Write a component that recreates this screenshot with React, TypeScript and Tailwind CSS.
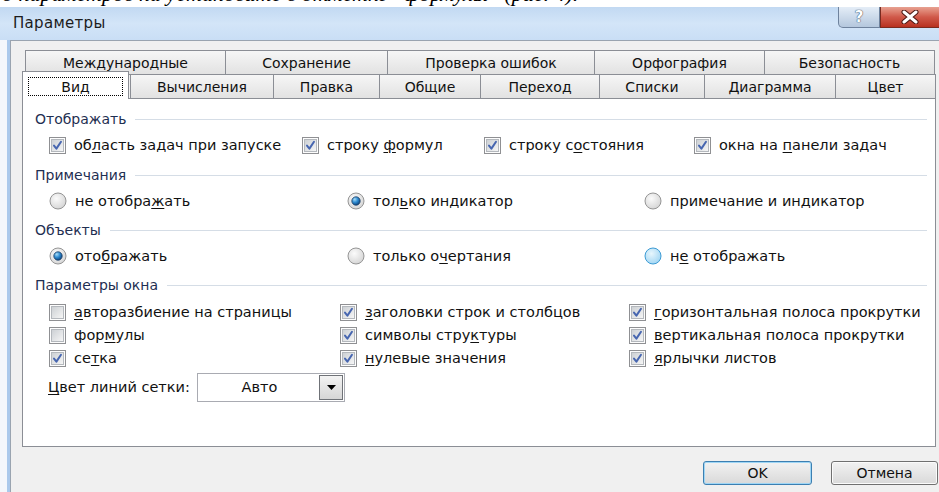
import React, { useId } from "react";

// label text uses "&" before the access-key letter, like Win32 resources
function Label({ text }: { text: string }) {
  const i = text.indexOf("&");
  if (i < 0) return <span>{text}</span>;
  return (
    <span>
      {text.slice(0, i)}
      <u className="underline-offset-2">{text[i + 1]}</u>
      {text.slice(i + 2)}
    </span>
  );
}

function CheckBox({ checked }: { checked: boolean }) {
  const id = useId();
  return (
    <svg width="17" height="17" viewBox="0 0 17 17" className="shrink-0">
      <defs>
        <linearGradient id={id} x1="0" y1="0" x2="1" y2="1">
          <stop offset="0" stopColor="#cbcfd3" />
          <stop offset="1" stopColor="#f7f7f7" />
        </linearGradient>
      </defs>
      <rect x="0.5" y="0.5" width="16" height="16" fill="#fdfdfd" stroke="#8f9093" />
      <rect x="2.5" y="2.5" width="12" height="12" fill={`url(#${id})`} stroke="#b4b8bd" />
      {checked && (
        <path d="M5 8.6 L7.4 11.6 L12 4.8" fill="none" stroke="#4766b0" strokeWidth="2" strokeLinecap="round" strokeLinejoin="round" />
      )}
    </svg>
  );
}

function Radio({ checked, hot }: { checked?: boolean; hot?: boolean }) {
  const id = useId();
  return (
    <svg width="18" height="18" viewBox="0 0 18 18" className="shrink-0">
      <defs>
        <radialGradient id={id + "a"} cx="0.4" cy="0.35" r="0.7">
          <stop offset="0" stopColor={hot ? "#e8f6fd" : "#fbfbfb"} />
          <stop offset="1" stopColor={hot ? "#9fd5f3" : "#d4d4d4"} />
        </radialGradient>
        <radialGradient id={id + "b"} cx="0.35" cy="0.3" r="0.75">
          <stop offset="0" stopColor="#a6dcf8" />
          <stop offset="0.5" stopColor="#2d8ad0" />
          <stop offset="1" stopColor="#0c3f77" />
        </radialGradient>
      </defs>
      <circle cx="9" cy="9" r="8" fill={`url(#${id}a)`} stroke={hot ? "#3d9bd4" : "#959595"} />
      {checked && <circle cx="9" cy="9" r="4.2" fill={`url(#${id}b)`} stroke="#1d3f66" strokeWidth="0.8" />}
    </svg>
  );
}

function Item({ text, box, width }: { text: string; box: React.ReactNode; width?: string }) {
  return (
    <div className={`flex items-center gap-[8px] text-[14.5px] ${width ?? ""}`}>
      {box}
      <Label text={text} />
    </div>
  );
}

function Section({ title, className }: { title: string; className: string }) {
  return (
    <div className={`flex items-center h-[20px] pl-[12px] pr-[8px] ${className}`}>
      <span className="text-[#1f2f52]">{title}</span>
      <div className="flex-1 h-px bg-[#d5dde6] ml-[9px]" />
    </div>
  );
}

const backTabs = [
  { name: "Международные", w: "w-[201px]" },
  { name: "Сохранение", w: "w-[163px]" },
  { name: "Проверка ошибок", w: "w-[208px]" },
  { name: "Орфография", w: "w-[171px]" },
  { name: "Безопасность", w: "w-[171px]" },
];

const frontTabs = [
  { name: "Вычисления", w: "w-[144px]" },
  { name: "Правка", w: "w-[107px]" },
  { name: "Общие", w: "w-[102px]" },
  { name: "Переход", w: "w-[120px]" },
  { name: "Списки", w: "w-[106px]" },
  { name: "Диаграмма", w: "w-[132px]" },
  { name: "Цвет", w: "w-[101px]" },
];

const tabCls =
  "flex items-center justify-center border border-[#8b8e95] bg-gradient-to-b from-[#f6f6f6] to-[#e2e2e2] text-[#111]";

export default function App() {
  return (
    <div className="w-[939px] h-[492px] overflow-hidden bg-white font-['DejaVu_Sans',sans-serif] text-[14px] leading-none text-[#111] flex flex-col">
      {/* tail of the paragraph above the screenshot */}
      <div className="h-[7px] overflow-hidden shrink-0">
        <div className="-mt-[17px] pl-[2px] whitespace-nowrap font-['Liberation_Serif',serif] italic text-[22px] leading-[22px] text-black">
          о параметров на установите в отметке «формулы» (рис. 4).
        </div>
      </div>

      {/* title bar */}
      <div className="h-[33px] shrink-0 flex bg-gradient-to-b from-[#c2d9f2] via-[#d3e5f8] to-[#c9def5]">
        <div className="pl-[13px] pt-[9px] text-[15px] tracking-[0.3px] text-[#1c1c1c]">Параметры</div>
        <div className="ml-auto flex h-[21px]">
          <div className="w-[42px] flex items-center justify-center rounded-bl-[5px] border border-t-0 border-[#6e829d] bg-gradient-to-b from-[#e4edf7] to-[#b4c7dd] text-[15px] font-bold text-white [text-shadow:0_0_1px_#2b3e58,0_0_1px_#2b3e58]">
            ?
          </div>
          <div className="w-[59px] flex items-center justify-center border border-t-0 border-r-0 border-[#7a2a1f] bg-gradient-to-b from-[#e7a191] via-[#d0594a] to-[#b8301f]">
            <svg width="18" height="14" viewBox="0 0 18 14">
              <path d="M3 2 L15 12 M15 2 L3 12" stroke="#4a1510" strokeWidth="5" strokeLinecap="round" />
              <path d="M3 2 L15 12 M15 2 L3 12" stroke="#fff" strokeWidth="3" strokeLinecap="round" />
            </svg>
          </div>
        </div>
      </div>

      <div className="flex flex-1">
        {/* left window frame */}
        <div className="w-[7px] bg-[#f3f7fc]" />
        <div className="w-[3px] bg-[#aac9ec]" />

        <div className="flex-1 bg-[#f0f0f0] border-l border-t border-[#9aa4b0]">
          {/* tab strip, back row */}
          <div className="ml-[14px] mt-[9px] flex h-[25px]">
            {backTabs.map((t, i) => (
              <div key={t.name} className={`${tabCls} ${t.w} ${i > 0 ? "-ml-px" : ""}`}>
                {t.name}
              </div>
            ))}
          </div>

          {/* tab strip, front row */}
          <div className="ml-[11px] -mt-[4px] flex items-end h-[28px]">
            <div className="relative z-10 w-[107px] h-[28px] bg-white border border-b-0 border-[#8b8e95] flex justify-center pt-[5px]">
              <div className="w-[95px] h-[19px] border border-dotted border-black flex items-center justify-center">
                Вид
              </div>
            </div>
            {frontTabs.map((t, i) => (
              <div key={t.name} className={`${tabCls} ${t.w} h-[25px] ${i > 0 ? "-ml-px" : "ml-px"}`}>
                {t.name}
              </div>
            ))}
          </div>

          {/* page "Вид" */}
          <div className="ml-[11px] -mt-px w-[914px] h-[349px] bg-white border border-[#8b8e95] pt-[10px]">
            <Section title="Отображать" className="" />
            <div className="flex items-center h-[22px] pl-[26px] mt-[5px]">
              <Item width="w-[253px]" text="об&ласть задач при запуске" box={<CheckBox checked />} />
              <Item width="w-[182px]" text="строку &формул" box={<CheckBox checked />} />
              <Item width="w-[210px]" text="строку с&остояния" box={<CheckBox checked />} />
              <Item text="окна на &панели задач" box={<CheckBox checked />} />
            </div>

            <Section title="Примечания" className="mt-[9px]" />
            <div className="flex items-center h-[22px] pl-[26px] mt-[5px]">
              <Item width="w-[298px]" text="не отобра&жать" box={<Radio />} />
              <Item width="w-[297px]" text="тол&ько индикатор" box={<Radio checked />} />
              <Item text="примечание и индикатор" box={<Radio />} />
            </div>

            <Section title="Объекты" className="mt-[8px]" />
            <div className="flex items-center h-[22px] pl-[26px] mt-[5px]">
              <Item width="w-[298px]" text="ото&бражать" box={<Radio checked />} />
              <Item width="w-[297px]" text="только о&чертания" box={<Radio />} />
              <Item text="н&е отображать" box={<Radio hot />} />
            </div>

            <Section title="Параметры окна" className="mt-[8px]" />
            <div className="mt-[6px] pl-[26px]">
              <div className="flex items-center h-[23px]">
                <Item width="w-[291px]" text="&авторазбиение на страницы" box={<CheckBox checked={false} />} />
                <Item width="w-[289px]" text="&заголовки строк и столбцов" box={<CheckBox checked />} />
                <Item text="&горизонтальная полоса прокрутки" box={<CheckBox checked />} />
              </div>
              <div className="flex items-center h-[23px]">
                <Item width="w-[291px]" text="фор&мулы" box={<CheckBox checked={false} />} />
                <Item width="w-[289px]" text="символы стру&ктуры" box={<CheckBox checked />} />
                <Item text="&вертикальная полоса прокрутки" box={<CheckBox checked />} />
              </div>
              <div className="flex items-center h-[23px]">
                <Item width="w-[291px]" text="се&тка" box={<CheckBox checked />} />
                <Item width="w-[289px]" text="&нулевые значения" box={<CheckBox checked />} />
                <Item text="&ярлычки листов" box={<CheckBox checked />} />
              </div>
            </div>

            <div className="mt-[3px] pl-[25px] flex items-center h-[29px] text-[14.5px]">
              <div className="w-[149px]">
                <Label text="&Цвет линий сетки:" />
              </div>
              <div className="w-[148px] h-[29px] border border-[#a9abb2] bg-white flex items-center">
                <div className="flex-1 text-center pl-[2px]">Авто</div>
                <div className="w-[24px] h-[25px] mr-[1px] border border-[#6f7277] bg-gradient-to-b from-[#f3f3f3] to-[#d6d6d6] flex items-center justify-center">
                  <svg width="9" height="5" viewBox="0 0 9 5">
                    <path d="M0 0 H9 L4.5 5 Z" fill="#000" />
                  </svg>
                </div>
              </div>
            </div>
          </div>

          {/* dialog buttons */}
          <div className="mt-[14px] flex justify-end gap-[19px] pr-[1px]">
            <button className="w-[109px] h-[24px] rounded-[3px] border border-[#3c7fb1] bg-gradient-to-b from-[#f2f2f2] to-[#d9d9d9] shadow-[inset_0_0_0_1px_#9fd6f5] text-[#111]">
              OK
            </button>
            <button className="w-[107px] h-[24px] rounded-[3px] border border-[#707070] bg-gradient-to-b from-[#f2f2f2] to-[#d9d9d9] shadow-[inset_0_0_0_1px_#fbfbfb] text-[#111]">
              Отмена
            </button>
          </div>
        </div>
      </div>
    </div>
  );
}
